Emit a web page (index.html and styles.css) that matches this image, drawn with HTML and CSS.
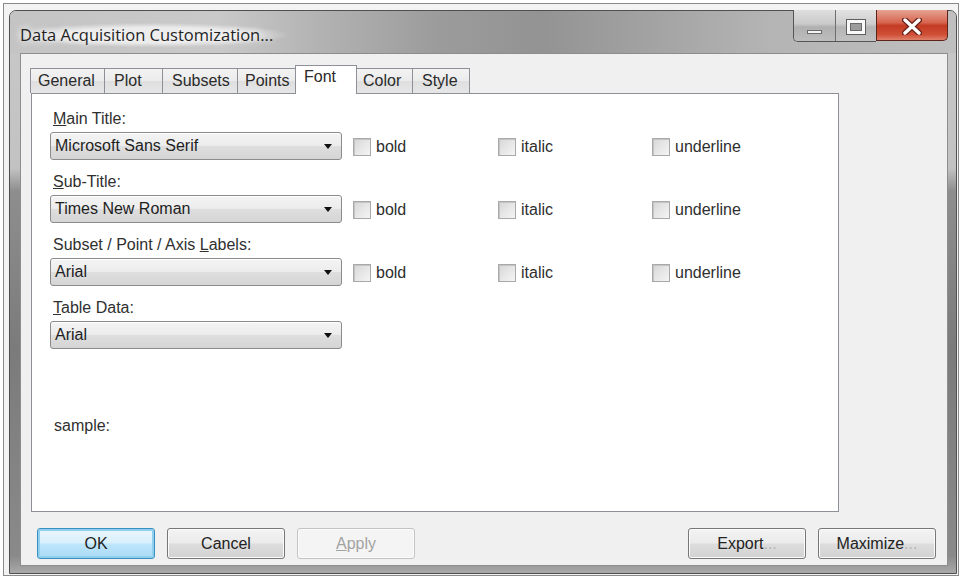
FILE: index.html
```html
<!DOCTYPE html>
<html lang="en">
<head>
    <meta charset="UTF-8" />
    <title>Data Acquisition Customization...</title>
    <link rel="stylesheet" href="styles.css">
</head>
<body>
    <div class="sheet">
        <div class="window">
            <div class="title-bar">
                <div class="title">Data Acquisition Customization...</div>
                <div class="caption">
                    <div class="cap-group">
                        <div class="cap-btn cap-min"><span class="min-glyph"></span></div>
                        <div class="cap-btn cap-max"><span class="max-glyph"></span></div>
                    </div>
                    <div class="cap-btn cap-close">
                        <svg width="20" height="17" viewBox="0 0 20 17">
                            <path d="M3 2 L17 15 M17 2 L3 15" stroke="#6b2418" stroke-width="6" stroke-linecap="round"/>
                            <path d="M3 2 L17 15 M17 2 L3 15" stroke="#ffffff" stroke-width="3.4" stroke-linecap="round"/>
                        </svg>
                    </div>
                </div>
            </div>

            <div class="client">
                <!-- Reiter -->
                <div class="tabs">
                    <div class="tab tab-general">General</div>
                    <div class="tab tab-plot">Plot</div>
                    <div class="tab tab-subsets">Subsets</div>
                    <div class="tab tab-points">Points</div>
                    <div class="tab tab-font active">Font</div>
                    <div class="tab tab-color">Color</div>
                    <div class="tab tab-style">Style</div>
                </div>

                <div class="tab-page">
                    <div class="field">
                        <div class="field-label"><u>M</u>ain Title:</div>
                        <div class="field-row">
                            <div class="combo"><span>Microsoft Sans Serif</span><span class="arrow"></span></div>
                            <div class="check check-bold"><span class="box"></span>bold</div>
                            <div class="check check-italic"><span class="box"></span>italic</div>
                            <div class="check"><span class="box"></span>underline</div>
                        </div>
                    </div>

                    <div class="field">
                        <div class="field-label"><u>S</u>ub-Title:</div>
                        <div class="field-row">
                            <div class="combo"><span>Times New Roman</span><span class="arrow"></span></div>
                            <div class="check check-bold"><span class="box"></span>bold</div>
                            <div class="check check-italic"><span class="box"></span>italic</div>
                            <div class="check"><span class="box"></span>underline</div>
                        </div>
                    </div>

                    <div class="field">
                        <div class="field-label">Subset / Point / Axis <u>L</u>abels:</div>
                        <div class="field-row">
                            <div class="combo"><span>Arial</span><span class="arrow"></span></div>
                            <div class="check check-bold"><span class="box"></span>bold</div>
                            <div class="check check-italic"><span class="box"></span>italic</div>
                            <div class="check"><span class="box"></span>underline</div>
                        </div>
                    </div>

                    <div class="field">
                        <div class="field-label"><u>T</u>able Data:</div>
                        <div class="field-row">
                            <div class="combo"><span>Arial</span><span class="arrow"></span></div>
                        </div>
                    </div>

                    <div class="sample">sample:</div>
                </div>

                <div class="buttons">
                    <button class="btn btn-default">OK</button>
                    <button class="btn">Cancel</button>
                    <button class="btn" disabled><u>A</u>pply</button>
                    <div class="spacer"></div>
                    <button class="btn">Export<span class="dots">...</span></button>
                    <button class="btn">Maximize<span class="dots">...</span></button>
                </div>
            </div>
        </div>
    </div>
</body>
</html>
```

FILE: styles.css
```css
body {
    margin: 0;
    background: #ffffff;
    font-family: "Liberation Sans", Arial, sans-serif;
    color: #262626;
}

.sheet {
    margin: 3px;
    height: 573px;
    box-sizing: border-box;
    border: 1px solid #8a8a8a;
    padding: 6px 1px 1px 5px;
    background: #f3f3f3;
}

/* Fensterrahmen */
.window {
    height: 100%;
    box-sizing: border-box;
    border: 1px solid #4f4f4f;
    border-radius: 7px 7px 0 0;
    padding: 0 8px 7px 10px;
    display: flex;
    flex-direction: column;
    background: linear-gradient(to bottom, #c9c9c9 0%, #c2c2c2 28%, #8e8e8e 32%, #7b7b7b 60%, #8a8a8a 97%, #a9a9a9 100%);
}

.title-bar {
    height: 42px;
    flex: none;
    margin: 0 -8px 0 -10px;
    padding: 0 8px 0 6px;
    display: flex;
    align-items: flex-start;
    border-radius: 6px 6px 0 0;
    background: linear-gradient(90deg, #c4c4c4 0%, #c9c9c9 22%, #b2b2b2 33%, #9c9c9c 45%, #939393 56%, #a3a3a3 68%, #b4b4b4 80%, #bfbfbf 100%);
}

.title {
    margin-top: 12px;
    padding: 2px 14px 2px 4px;
    font-family: "Open Sans", "Noto Sans", sans-serif;
    font-size: 16.5px;
    line-height: 20px;
    color: #1f1f1f;
    text-shadow: 0 0 6px #ffffff, 0 0 10px #f2f2f2;
    background: radial-gradient(ellipse at center, rgba(236,236,236,0.95) 45%, rgba(236,236,236,0) 72%);
}

.caption {
    margin-left: auto;
    margin-top: -1px;
    display: flex;
}

.cap-group {
    display: flex;
    border: 1px solid #555555;
    border-top: none;
    border-right: none;
    border-radius: 0 0 0 5px;
    overflow: hidden;
}

.cap-btn {
    height: 31px;
    box-sizing: border-box;
    display: flex;
    align-items: center;
    justify-content: center;
}

.cap-min {
    width: 42px;
    align-items: flex-end;
    padding-bottom: 7px;
    border-right: 1px solid #6e6e6e;
    background: linear-gradient(to bottom, #dedede 0%, #c9c9c9 45%, #b0b0b0 55%, #bdbdbd 100%);
}

.cap-max {
    width: 40px;
    padding-top: 2px;
    background: linear-gradient(to bottom, #e2e2e2 0%, #cdcdcd 45%, #b4b4b4 55%, #c1c1c1 100%);
}

.min-glyph {
    width: 15px;
    height: 4px;
    box-sizing: border-box;
    border: 1px solid #6a6a6a;
    background: #f4f4f4;
}

.max-glyph {
    width: 18px;
    height: 14px;
    box-sizing: border-box;
    border: 3px solid #fafafa;
    box-shadow: 0 0 0 1px #5e5e5e, inset 0 0 0 1px #6a6a6a;
    background: #9c9c9c;
}

.cap-close {
    width: 72px;
    padding-top: 2px;
    border: 1px solid #5c2318;
    border-top: none;
    border-radius: 0 0 5px 0;
    background: linear-gradient(to bottom, #e6a394 0%, #d6654f 42%, #c33b22 52%, #cf4f37 82%, #e0806a 100%);
}

/* Client-Bereich */
.client {
    flex: 1;
    box-sizing: border-box;
    border: 1px solid #8d8d8d;
    background: #f0f0f0;
    padding: 11px 11px 0 9px;
    display: flex;
    flex-direction: column;
}

.tabs {
    display: flex;
    align-items: flex-end;
    height: 28px;
    position: relative;
    z-index: 1;
}

.tab {
    height: 25px;
    box-sizing: border-box;
    border: 1px solid #8d9097;
    border-bottom: none;
    margin-left: -1px;
    padding-left: 7px;
    font-size: 16px;
    line-height: 24px;
    color: #2a2a2a;
    background: linear-gradient(to bottom, #f3f3f3 0%, #ebebeb 50%, #dfdfdf 51%, #e6e6e6 100%);
}

.tab:first-child {
    margin-left: 0;
}

.tab.active {
    height: 29px;
    margin-bottom: -1px;
    line-height: 22px;
    padding-left: 8px;
    background: #ffffff;
}

.tab-general { width: 75px; }
.tab-plot { width: 59px; padding-left: 9px; }
.tab-subsets { width: 76px; padding-left: 9px; }
.tab-points { width: 59px; }
.tab-font { width: 62px; }
.tab-color { width: 57px; padding-left: 6px; }
.tab-style { width: 58px; padding-left: 9px; }

.tab-page {
    margin-left: 1px;
    width: 808px;
    height: 419px;
    box-sizing: border-box;
    border: 1px solid #8d9097;
    background: #ffffff;
    padding: 15px 0 0 18px;
}

.field {
    margin-bottom: 12px;
}

.field-label {
    padding-left: 3px;
    font-size: 16px;
    line-height: 20px;
    margin-bottom: 3px;
    color: #303030;
}

.field-row {
    display: flex;
    align-items: center;
}

.combo {
    width: 292px;
    height: 28px;
    box-sizing: border-box;
    border: 1px solid #8b8b8b;
    border-radius: 3px;
    padding: 0 9px 0 4px;
    display: flex;
    align-items: center;
    justify-content: space-between;
    font-size: 16px;
    color: #1e1e1e;
    background: linear-gradient(to bottom, #f4f4f4 0%, #ececec 48%, #dedede 52%, #d5d5d5 100%);
    box-shadow: inset 0 1px 0 #ffffff;
}

.arrow {
    width: 0;
    height: 0;
    border-left: 4px solid transparent;
    border-right: 4px solid transparent;
    border-top: 5px solid #111111;
}

.check {
    display: flex;
    align-items: center;
    margin-top: 2px;
    font-size: 16px;
    color: #2e2e2e;
}

.check-bold {
    margin-left: 11px;
    width: 145px;
}

.check-italic {
    width: 154px;
}

.box {
    width: 18px;
    height: 18px;
    box-sizing: border-box;
    margin-right: 5px;
    border: 1px solid #a9a9a9;
    background: linear-gradient(135deg, #d6d6d6 0%, #e6e6e6 50%, #f4f4f4 100%);
    box-shadow: inset 1px 1px 0 #c4c4c4;
}

.sample {
    margin-top: 67px;
    padding-left: 4px;
    font-size: 16px;
    line-height: 20px;
    color: #303030;
}

/* Schaltflächen */
.buttons {
    display: flex;
    gap: 12px;
    margin-top: 16px;
    padding-left: 7px;
}

.spacer {
    flex: 1;
}

.btn {
    width: 118px;
    height: 31px;
    box-sizing: border-box;
    border: 1px solid #777777;
    border-radius: 3px;
    padding: 0;
    font-family: "Liberation Sans", Arial, sans-serif;
    font-size: 16px;
    color: #222222;
    background: linear-gradient(to bottom, #f3f3f3 0%, #ebebeb 48%, #dddddd 52%, #d2d2d2 100%);
    box-shadow: inset 0 0 0 1px #fbfbfb;
}

.btn-default {
    border-color: #3b8fc0;
    background: linear-gradient(to bottom, #eaf6fd 0%, #d9f0fc 48%, #bee6fd 52%, #a9daf5 100%);
    box-shadow: inset 0 0 0 2px #8fd0ef;
}

.btn:disabled {
    border-color: #c3c3c3;
    color: #a3a3a3;
    background: #f4f4f4;
}

.dots {
    color: #b5b5b5;
}
```
